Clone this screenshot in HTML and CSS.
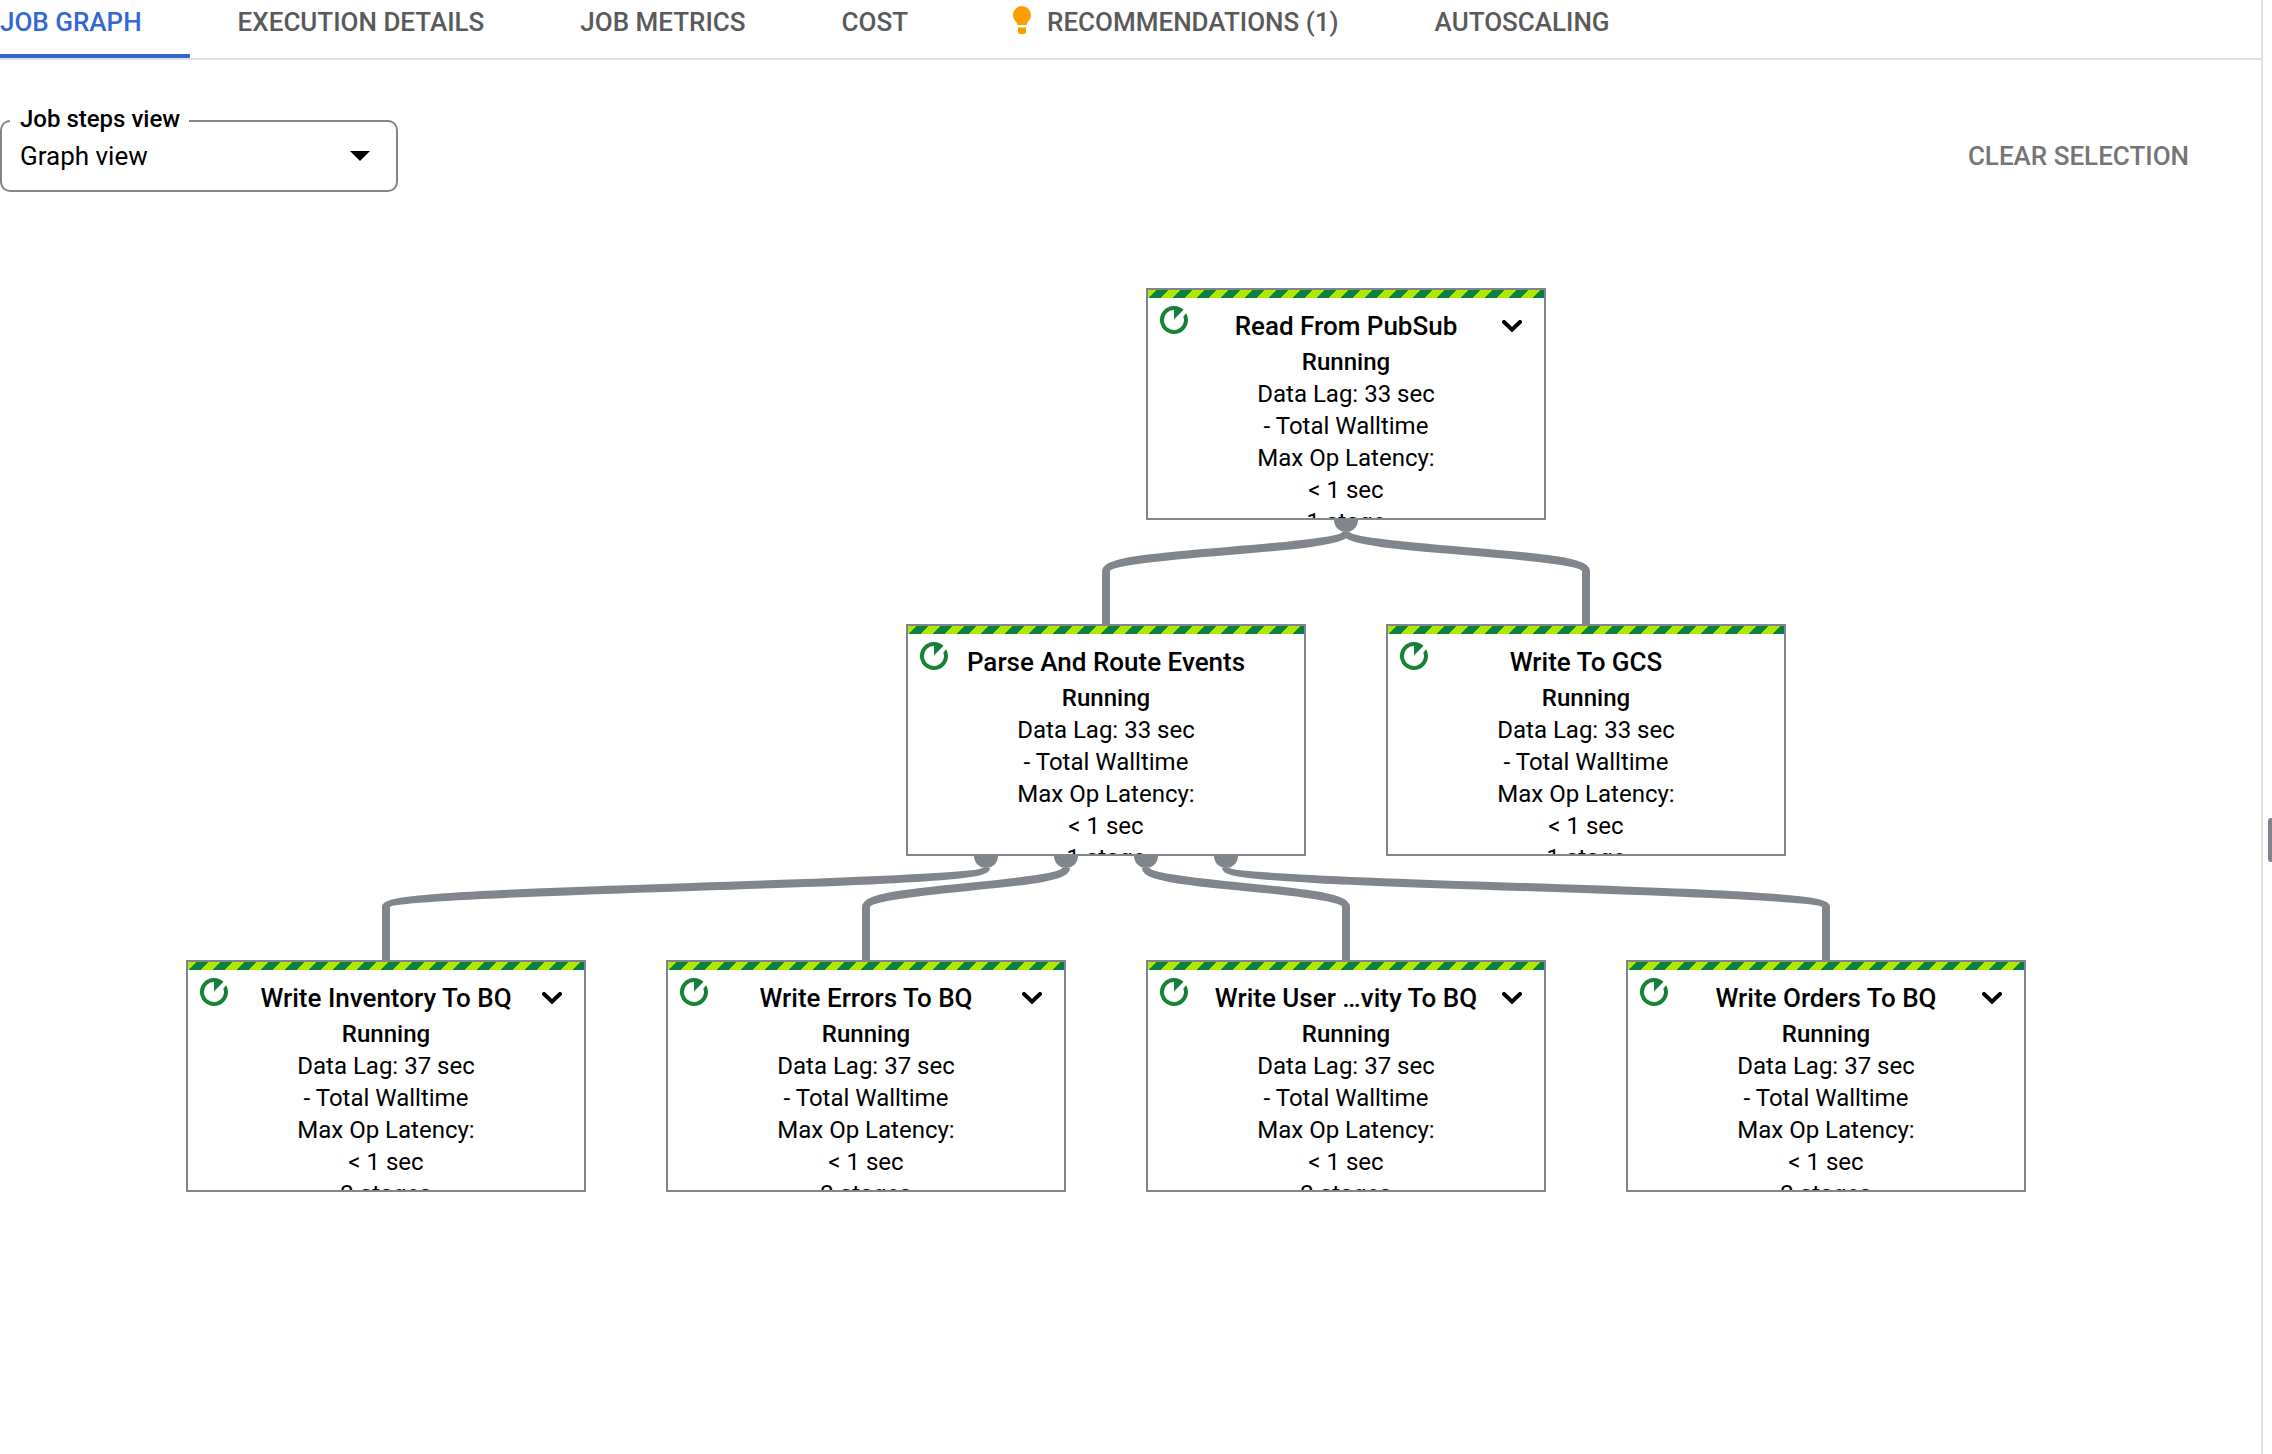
FILE: index.html
```html
<!DOCTYPE html>
<html lang="en">
<head>
<meta charset="utf-8">
<title>Job graph</title>
<link rel="stylesheet" href="styles.css">
</head>
<body>
<svg class="sprite" aria-hidden="true">
  <symbol id="running" viewBox="0 0 28 28">
    <path d="M14 0A14 14 0 0 1 23.6 3.8L14 13.6V4A10 10 0 1 0 23.3 10.4L26.2 7.2A14 14 0 1 1 14 0Z" fill="#188038"/>
  </symbol>
  <symbol id="chevron" viewBox="0 0 20 12">
    <path d="M2 2L10 9.6L18 2" fill="none" stroke="#000" stroke-width="4" stroke-linecap="round"/>
  </symbol>
</svg>
<main class="page">
  <nav class="tabs">
    <a class="tab tab-active" href="#graph">JOB GRAPH</a>
    <a class="tab" href="#details">EXECUTION DETAILS</a>
    <a class="tab" href="#metrics">JOB METRICS</a>
    <a class="tab" href="#cost">COST</a>
    <a class="tab" href="#recommendations">
      <svg class="bulb" viewBox="0 0 36 36" aria-hidden="true">
        <path d="M18 4a9 9 0 0 1 9 9c0 3-1.500 5-3 6.800c-.8 1-1.200 2-1.200 3.200h-9.600c0-1.200-.4-2.200-1.200-3.200C10.500 18 9 16 9 13a9 9 0 0 1 9-9zM14 25.500h8v4.500a2 2 0 0 1-2 2h-4a2 2 0 0 1-2-2z" fill="#ff9e00"/>
      </svg>
      RECOMMENDATIONS (1)</a>
    <a class="tab" href="#autoscaling">AUTOSCALING</a>
  </nav>
  <div class="toolbar">
    <div class="field">
      <label class="field-label" for="view">Job steps view</label>
      <select class="field-select" id="view"><option>Graph view</option><option>Table view</option></select>
      <svg class="field-arrow" viewBox="0 0 20 10" aria-hidden="true"><path d="M0 0h20L10 10z"/></svg>
    </div>
    <button class="clear" type="button">CLEAR SELECTION</button>
  </div>
  <section class="graph" id="graph">
    <svg class="edges" aria-hidden="true">
      <g fill="none" stroke="#80868b" stroke-width="8">
        <path d="M1346 340C1346 359 1106 359 1106 379V434"/>
        <path d="M1346 340C1346 359 1586 359 1586 379V434"/>
        <path d="M986 676C986 695 386 695 386 715V770"/>
        <path d="M1066 676C1066 695 866 695 866 715V770"/>
        <path d="M1146 676C1146 695 1346 695 1346 715V770"/>
        <path d="M1226 676C1226 695 1826 695 1826 715V770"/>
      </g>
      <g fill="#80868b">
        <circle cx="1346" cy="328" r="12"/>
        <circle cx="986" cy="664" r="12"/>
        <circle cx="1066" cy="664" r="12"/>
        <circle cx="1146" cy="664" r="12"/>
        <circle cx="1226" cy="664" r="12"/>
      </g>
    </svg>
    <article class="node node-read">
      <header class="node-head">
        <svg class="status"><use href="#running"/></svg>
        <h2 class="node-title">Read From PubSub</h2>
        <button class="expand" type="button" aria-label="Expand"><svg class="chevron"><use href="#chevron"/></svg></button>
      </header>
      <p class="state">Running</p>
      <p>Data Lag: 33 sec</p><p>- Total Walltime</p><p>Max Op Latency:</p><p>&lt; 1 sec</p><p>1 stage</p>
    </article>
    <article class="node node-parse">
      <header class="node-head">
        <svg class="status"><use href="#running"/></svg>
        <h2 class="node-title">Parse And Route Events</h2>
      </header>
      <p class="state">Running</p>
      <p>Data Lag: 33 sec</p><p>- Total Walltime</p><p>Max Op Latency:</p><p>&lt; 1 sec</p><p>1 stage</p>
    </article>
    <article class="node node-gcs">
      <header class="node-head">
        <svg class="status"><use href="#running"/></svg>
        <h2 class="node-title">Write To GCS</h2>
      </header>
      <p class="state">Running</p>
      <p>Data Lag: 33 sec</p><p>- Total Walltime</p><p>Max Op Latency:</p><p>&lt; 1 sec</p><p>1 stage</p>
    </article>
    <article class="node node-inventory">
      <header class="node-head">
        <svg class="status"><use href="#running"/></svg>
        <h2 class="node-title">Write Inventory To BQ</h2>
        <button class="expand" type="button" aria-label="Expand"><svg class="chevron"><use href="#chevron"/></svg></button>
      </header>
      <p class="state">Running</p>
      <p>Data Lag: 37 sec</p><p>- Total Walltime</p><p>Max Op Latency:</p><p>&lt; 1 sec</p><p>2 stages</p>
    </article>
    <article class="node node-errors">
      <header class="node-head">
        <svg class="status"><use href="#running"/></svg>
        <h2 class="node-title">Write Errors To BQ</h2>
        <button class="expand" type="button" aria-label="Expand"><svg class="chevron"><use href="#chevron"/></svg></button>
      </header>
      <p class="state">Running</p>
      <p>Data Lag: 37 sec</p><p>- Total Walltime</p><p>Max Op Latency:</p><p>&lt; 1 sec</p><p>2 stages</p>
    </article>
    <article class="node node-user">
      <header class="node-head">
        <svg class="status"><use href="#running"/></svg>
        <h2 class="node-title">Write User …vity To BQ</h2>
        <button class="expand" type="button" aria-label="Expand"><svg class="chevron"><use href="#chevron"/></svg></button>
      </header>
      <p class="state">Running</p>
      <p>Data Lag: 37 sec</p><p>- Total Walltime</p><p>Max Op Latency:</p><p>&lt; 1 sec</p><p>2 stages</p>
    </article>
    <article class="node node-orders">
      <header class="node-head">
        <svg class="status"><use href="#running"/></svg>
        <h2 class="node-title">Write Orders To BQ</h2>
        <button class="expand" type="button" aria-label="Expand"><svg class="chevron"><use href="#chevron"/></svg></button>
      </header>
      <p class="state">Running</p>
      <p>Data Lag: 37 sec</p><p>- Total Walltime</p><p>Max Op Latency:</p><p>&lt; 1 sec</p><p>2 stages</p>
    </article>
  </section>
</main>
<aside class="splitter"><div class="handle"></div></aside>
</body>
</html>
```
FILE: styles.css
```css
* { box-sizing: border-box; }

body {
  margin: 0;
  display: flex;
  min-height: 100vh;
  background: #fff;
  color: #000;
  font: 400 24px/32px Roboto, sans-serif;
}

h2, p { margin: 0; }

.sprite { position: absolute; width: 0; height: 0; }

.page {
  flex: 1;
  min-width: 0;
  display: flex;
  flex-direction: column;
  border-right: 2px solid #e0e0e0;
}

/* Tabs */
.tabs {
  display: flex;
  border-bottom: 2px solid #e0e0e0;
}

.tab {
  display: flex;
  align-items: center;
  gap: 7px;
  height: 58px;
  padding: 0 48px 10px;
  border-bottom: 4px solid transparent;
  color: #5a5a5a;
  font-size: 26px;
  font-weight: 500;
  text-decoration: none;
  white-space: nowrap;
}

.tab:first-child { padding-left: 0; }

.tab-active {
  color: #3367d6;
  border-bottom-color: #3367d6;
}

.bulb { width: 36px; height: 36px; margin-bottom: 4px; }

/* Toolbar */
.toolbar {
  display: flex;
  justify-content: space-between;
  align-items: center;
  padding: 60px 72px 0 0;
}

.field { position: relative; width: 398px; }

.field-label {
  position: absolute;
  left: 10px;
  top: -15px;
  padding: 0 9px 0 10px;
  background: #fff;
  font-weight: 500;
  line-height: 28px;
}

.field-select {
  appearance: none;
  display: block;
  width: 100%;
  height: 72px;
  padding: 0 48px 0 18px;
  border: 2px solid #80868b;
  border-radius: 10px;
  background: #fff;
  color: #000;
  font: 400 26px/32px Roboto, sans-serif;
}

.field-arrow {
  position: absolute;
  right: 28px;
  top: 31px;
  width: 20px;
  height: 10px;
  pointer-events: none;
}

.clear {
  padding: 0;
  border: 0;
  background: none;
  color: #757575;
  font: 500 26px/32px Roboto, sans-serif;
}

/* Graph canvas */
.graph {
  position: relative;
  flex: 1;
  min-height: 1048px;
}

.edges {
  position: absolute;
  left: 0;
  top: 0;
  width: 100%;
  height: 100%;
}

.node {
  position: absolute;
  width: 400px;
  height: 232px;
  border: 2px solid #80868b;
  background: #fff;
  overflow: hidden;
  text-align: center;
}

.node::before {
  content: "";
  display: block;
  height: 8px;
  background: linear-gradient(-45deg, #0b8043 25%, #aeea00 25% 50%, #0b8043 50% 75%, #aeea00 75%) right bottom / 24px 24px;
}

.node-read { left: 1146px; top: 96px; }
.node-parse { left: 906px; top: 432px; }
.node-gcs { left: 1386px; top: 432px; }
.node-inventory { left: 186px; top: 768px; }
.node-errors { left: 666px; top: 768px; }
.node-user { left: 1146px; top: 768px; }
.node-orders { left: 1626px; top: 768px; }

.node-head {
  display: grid;
  grid-template-columns: 56px 1fr 56px;
  padding-top: 8px;
}

.status {
  width: 28px;
  height: 28px;
  margin-left: 12px;
}

.node-title {
  font-size: 26px;
  font-weight: 500;
  line-height: 40px;
  white-space: nowrap;
}

.expand {
  display: flex;
  align-items: center;
  justify-content: center;
  padding: 0 8px 0 0;
  border: 0;
  background: none;
}

.chevron { width: 20px; height: 12px; }

.state { font-weight: 500; }

/* Side panel splitter */
.splitter {
  display: flex;
  justify-content: flex-end;
  width: 9px;
}

.handle {
  width: 4px;
  height: 44px;
  margin-top: 818px;
  border-radius: 3px 0 0 3px;
  background: #80868b;
}
```
